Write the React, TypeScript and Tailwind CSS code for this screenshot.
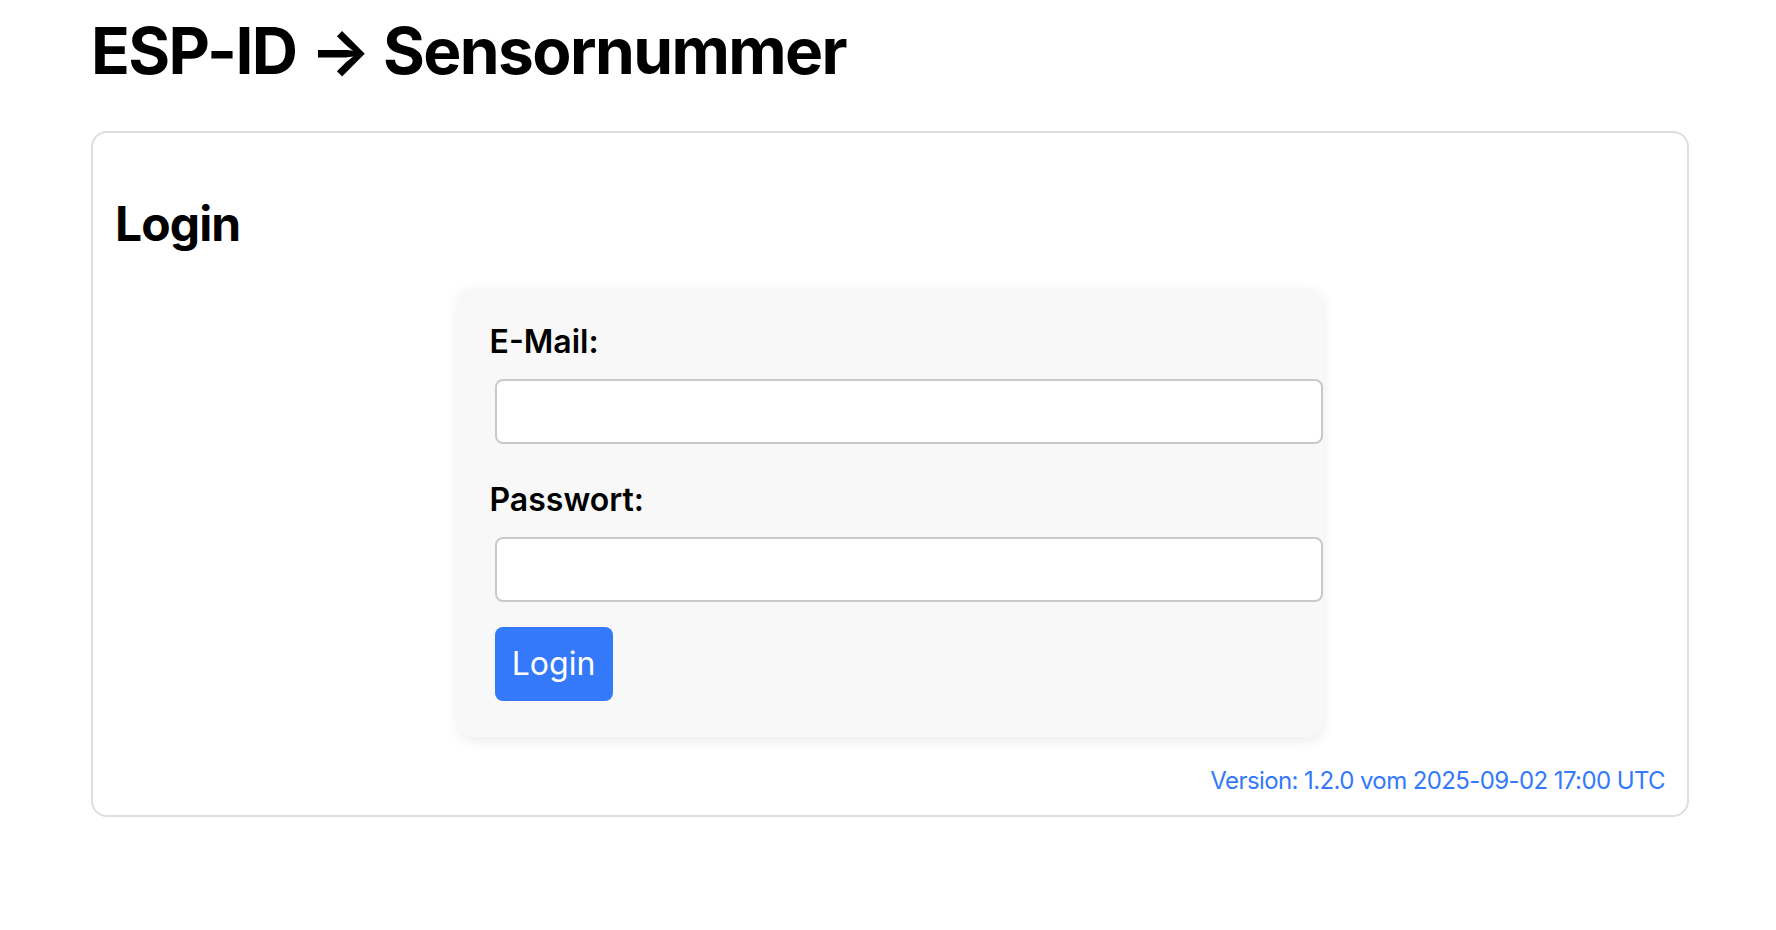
import React, { useState } from 'react';

const font = { fontFamily: 'Inter, "Noto Sans", "Liberation Sans", sans-serif' };

export default function App() {
  const [email, setEmail] = useState('');
  const [password, setPassword] = useState('');

  const handleSubmit = (e: React.FormEvent) => {
    e.preventDefault();
  };

  return (
    <div className="min-h-[930px] bg-white text-black" style={font}>
      <div className="ml-[91px] w-[1598px]">
        <h1 className="pt-[12px] text-[64px] leading-[77px] font-bold tracking-[-1.6px]">
          ESP-ID → Sensornummer
        </h1>

        <div className="mt-[42px] rounded-[16px] border-2 border-[#dedede] px-[22px] pt-[62px] pb-[20px]">
          <h2 className="text-[48px] leading-[58px] font-bold tracking-[-0.9px]">Login</h2>

          <form
            onSubmit={handleSubmit}
            className="mx-auto mt-[35px] flex w-[865px] flex-col items-start rounded-[16px] bg-[#f8f8f8] pt-[35px] pr-0 pb-[36px] pl-[32px] shadow-[0_4px_14px_rgba(0,0,0,0.08)]"
          >
            <label htmlFor="email" className="text-[32px] leading-[38px] font-semibold">
              E-Mail:
            </label>
            <input
              id="email"
              type="email"
              value={email}
              onChange={(e) => setEmail(e.target.value)}
              className="mt-[18px] ml-[5px] h-[65px] w-[828px] rounded-[8px] border-2 border-[#c9c9c9] bg-white px-[12px] text-[28px] outline-none"
            />

            <label htmlFor="password" className="mt-[37px] text-[32px] leading-[38px] font-semibold">
              Passwort:
            </label>
            <input
              id="password"
              type="password"
              value={password}
              onChange={(e) => setPassword(e.target.value)}
              className="mt-[18px] ml-[5px] h-[65px] w-[828px] rounded-[8px] border-2 border-[#c9c9c9] bg-white px-[12px] text-[28px] outline-none"
            />

            <button
              type="submit"
              className="mt-[25px] ml-[5px] h-[74px] w-[118px] rounded-[8px] bg-[#3379fa] text-[32px] leading-none text-white"
            >
              Login
            </button>
          </form>

          <p className="mt-[29px] text-right text-[24px] leading-[29px] tracking-[-0.6px] text-[#3379fa]">
            Version: 1.2.0 vom 2025-09-02 17:00 UTC
          </p>
        </div>
      </div>
    </div>
  );
}
